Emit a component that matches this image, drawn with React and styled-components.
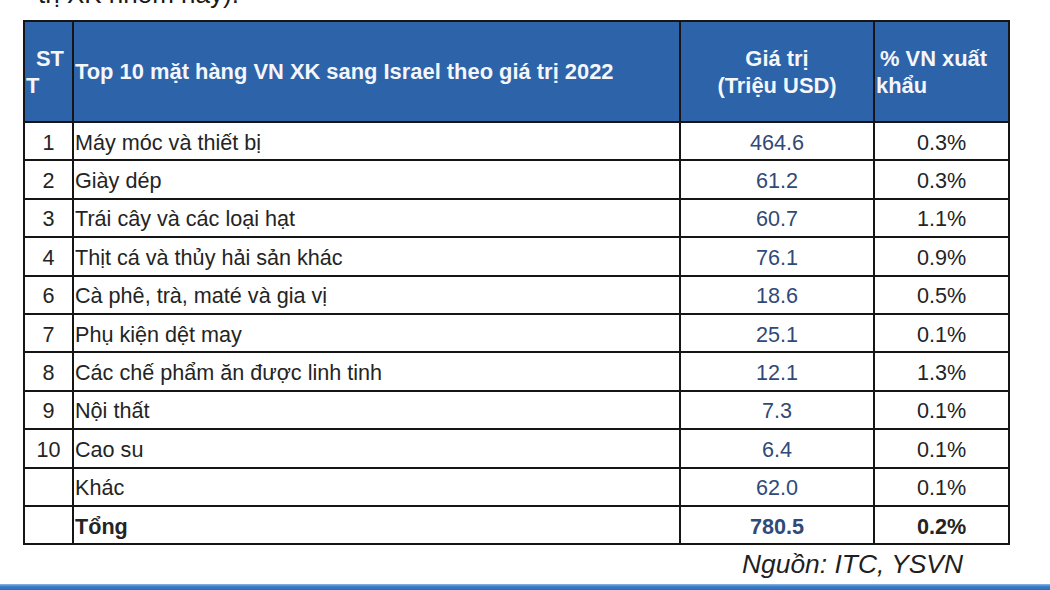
import React from 'react'
import styled, { createGlobalStyle } from 'styled-components'

const GlobalStyle = createGlobalStyle`
	html, body {
		margin: 0;
		padding: 0;
		background: #fff;
		overflow: hidden;
	}
	body {
		font-family: "Liberation Sans", Arial, sans-serif;
	}
`

const Page = styled.div`
	width: 1050px;
	height: 590px;
	display: flex;
	flex-direction: column;
	overflow: hidden;
`

const TopNote = styled.div`
	font-size: 26px;
	line-height: 30px;
	color: #1a1a1a;
	margin: -21px 0 0 38px;
	height: 30px;
`

const Table = styled.table`
	margin: 11px 0 0 23px;
	width: 985px;
	border-collapse: collapse;
	table-layout: fixed;
	font-size: 21.6px;
	color: #222;
	border: 2px solid #151515;
`

const HeadCell = styled.th`
	background: #2c63a9;
	color: #f4f6fa;
	font-size: 21.9px;
	font-weight: 700;
	border: 2px solid #151515;
	height: 99px;
	padding: 0 1px;
	line-height: 27px;
	vertical-align: middle;
	text-align: ${({align}) => align || 'left'};
`

const Indent = styled.span`
	padding-left: ${({size}) => size}px;
`

const Cell = styled.td`
	border: 2px solid #151515;
	height: 33.4px;
	padding: 3px 1px 0;
	line-height: 24px;
	vertical-align: middle;
	text-align: ${({align}) => align || 'left'};
	color: ${({navy}) => navy ? '#2f4a78' : '#242424'};
	font-weight: ${({bold}) => bold ? 700 : 400};
`

const Source = styled.div`
	align-self: flex-end;
	margin: 4px 87px 0 0;
	font-size: 26.4px;
	font-style: italic;
	line-height: 30px;
	color: #1f1f1f;
`

const BottomBar = styled.div`
	margin-top: auto;
	height: 6px;
	background: linear-gradient(to bottom, #8db9e6 0%, #3d7fcb 40%, #2f6cb5 100%);
`

const rows = [
	['1', 'Máy móc và thiết bị', '464.6', '0.3%'],
	['2', 'Giày dép', '61.2', '0.3%'],
	['3', 'Trái cây và các loại hạt', '60.7', '1.1%'],
	['4', 'Thịt cá và thủy hải sản khác', '76.1', '0.9%'],
	['6', 'Cà phê, trà, maté và gia vị', '18.6', '0.5%'],
	['7', 'Phụ kiện dệt may', '25.1', '0.1%'],
	['8', 'Các chế phẩm ăn được linh tinh', '12.1', '1.3%'],
	['9', 'Nội thất', '7.3', '0.1%'],
	['10', 'Cao su', '6.4', '0.1%'],
	['', 'Khác', '62.0', '0.1%'],
]

const App = () => (
	<Page>
		<GlobalStyle />
		<TopNote>trị XK nhóm này).</TopNote>
		<Table>
			<colgroup>
				<col style={{ width: 49 }} />
				<col style={{ width: 607 }} />
				<col style={{ width: 194 }} />
				<col style={{ width: 135 }} />
			</colgroup>
			<thead>
				<tr>
					<HeadCell><Indent size={10}>ST</Indent><br />T</HeadCell>
					<HeadCell>Top 10 mặt hàng VN XK sang Israel theo giá trị 2022</HeadCell>
					<HeadCell align="center">Giá trị<br />(Triệu USD)</HeadCell>
					<HeadCell><Indent size={4}>% VN xuất</Indent><br />khẩu</HeadCell>
				</tr>
			</thead>
			<tbody>
				{rows.map(([no, name, value, share]) => (
					<tr key={name}>
						<Cell align="center">{no}</Cell>
						<Cell>{name}</Cell>
						<Cell align="center" navy>{value}</Cell>
						<Cell align="center">{share}</Cell>
					</tr>
				))}
				<tr>
					<Cell />
					<Cell bold>Tổng</Cell>
					<Cell align="center" navy bold>780.5</Cell>
					<Cell align="center" bold>0.2%</Cell>
				</tr>
			</tbody>
		</Table>
		<Source>Nguồn: ITC, YSVN</Source>
		<BottomBar />
	</Page>
)

export default App
